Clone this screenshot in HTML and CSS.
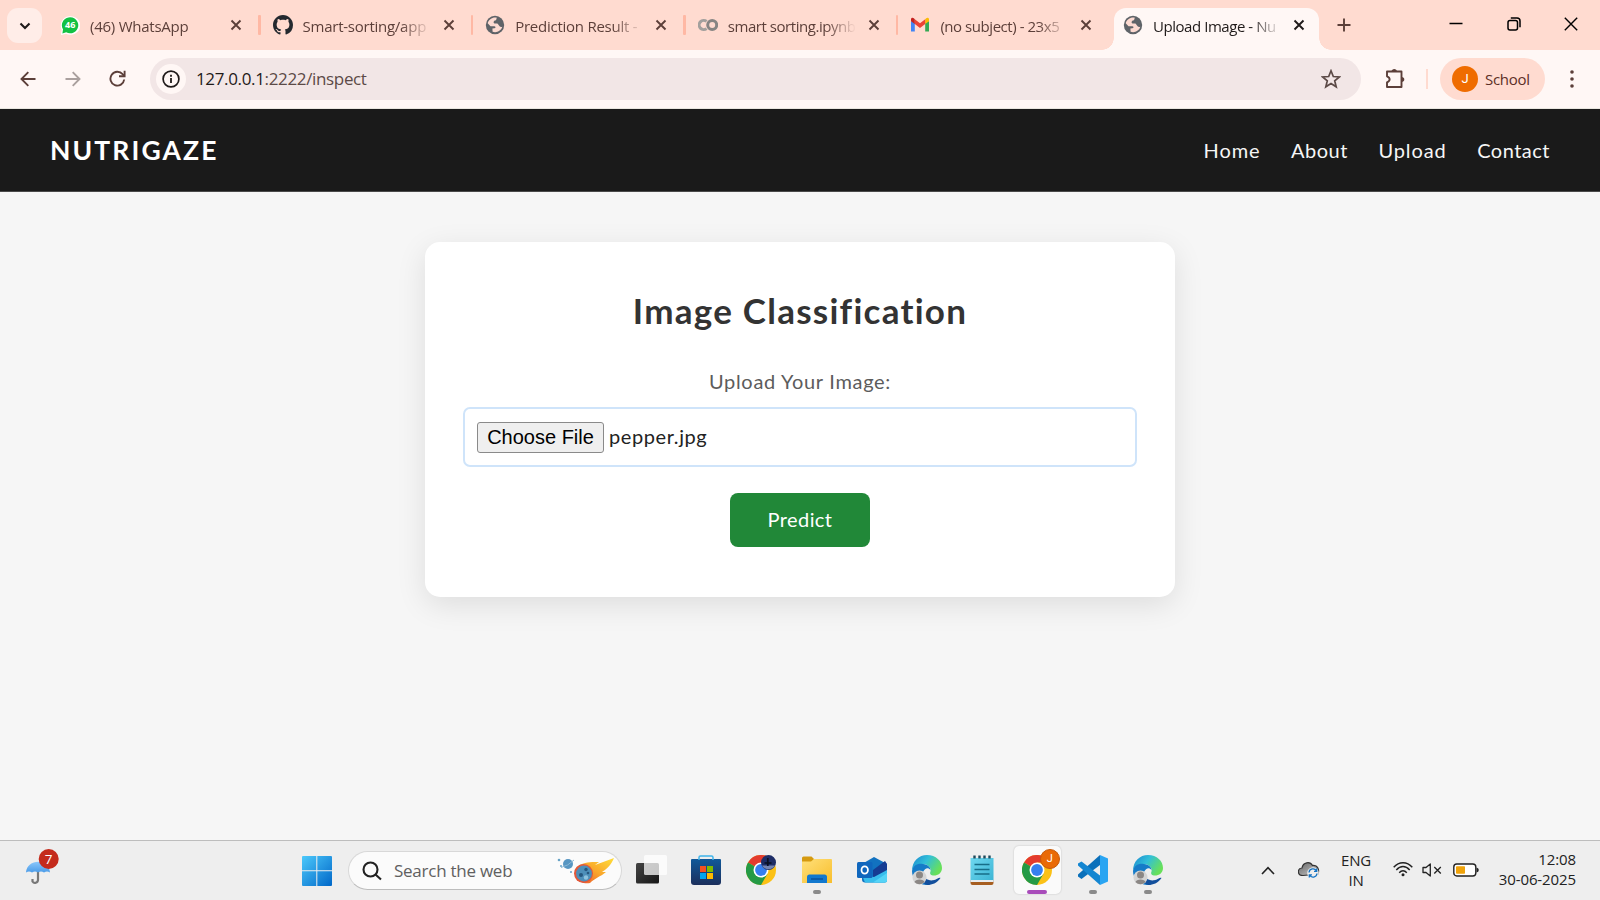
FILE: index.html
```
<!DOCTYPE html>
<html lang="en">
<head>
<meta charset="utf-8">
<title>Upload Image - NutriGaze</title>
<link rel="stylesheet" href="styles.css">
</head>
<body>
<svg class="defs" width="0" height="0" aria-hidden="true">
  <defs>
    <linearGradient id="win" x1="0" y1="0" x2="1" y2="1"><stop offset="0" stop-color="#4cc9fb"/><stop offset="1" stop-color="#0067c8"/></linearGradient>
    <linearGradient id="store" x1="0" y1="0" x2="0" y2="1"><stop offset="0" stop-color="#10599a"/><stop offset="1" stop-color="#1c2f5c"/></linearGradient>
    <linearGradient id="folder" x1="0" y1="0" x2="1" y2="1"><stop offset="0" stop-color="#ffe07a"/><stop offset="1" stop-color="#f8be2c"/></linearGradient>
    <linearGradient id="edgeTop" x1="0" y1="0" x2="1" y2=".5"><stop offset="0" stop-color="#1a86d0"/><stop offset=".5" stop-color="#32bfd8"/><stop offset="1" stop-color="#68e05a"/></linearGradient>
    <linearGradient id="flame" x1="0" y1="1" x2="1" y2="0"><stop offset="0" stop-color="#e9502c"/><stop offset=".5" stop-color="#f9a62c"/><stop offset="1" stop-color="#ffdf38"/></linearGradient>
    <linearGradient id="umb" x1="0" y1="0" x2="0" y2="1"><stop offset="0" stop-color="#8cc8fb"/><stop offset="1" stop-color="#4a9be8"/></linearGradient>
    <linearGradient id="cloud" x1="0" y1="0" x2="1" y2="1"><stop offset="0" stop-color="#666"/><stop offset="1" stop-color="#ccc"/></linearGradient>
    <linearGradient id="pad" x1="0" y1="0" x2="1" y2="1"><stop offset="0" stop-color="#6fd8f0"/><stop offset="1" stop-color="#3cb4d4"/></linearGradient>
    <linearGradient id="view" x1="0" y1="0" x2="1" y2="1"><stop offset="0" stop-color="#444"/><stop offset="1" stop-color="#161616"/></linearGradient>
  </defs>
  <symbol id="close" viewBox="0 0 12 12"><path d="M1.500 1.500l9 9M10.500 1.500l-9 9" fill="none" stroke="currentColor" stroke-width="1.900"/></symbol>
  <symbol id="globe" viewBox="0 0 20 20"><circle cx="10" cy="10" r="9.200" fill="#5f6368"/><path d="M11.600 2.600C7.400 1.900 3.500 4.600 2.700 8.200L5.500 11.200H9.200C10.800 11.200 11 13 9.300 13.300L7.400 13.500 7.600 16.700C11.500 18.300 16.400 15.700 17.300 11.800 15.600 12.400 14.800 11.900 14 10.600 12.600 8.900 13.200 8.400 11 8.500 8.900 8.700 7.900 7.500 9 6.200 10 5.200 11.800 6 11.600 2.600Z" fill="#fddad1"/></symbol>
  <symbol id="chrome" viewBox="0 0 30 30">
    <circle cx="15" cy="15" r="15" fill="#fbc116"/>
    <path d="M15 15L2 7.500A15 15 0 0 1 28 7.500H15Z" fill="#e33b2e"/>
    <path d="M15 15L8.500 11.200 2 7.500A15 15 0 0 0 15 30L21.500 18.750Z" fill="#249a45"/>
    <circle cx="15" cy="15" r="7.500" fill="#fff"/><circle cx="15" cy="15" r="5.900" fill="#357ff0"/>
  </symbol>
  <symbol id="edge" viewBox="0 0 30 30">
    <path d="M0 16C0 6 7 0 15 0 24 0 30 6 30 13 30 18 26 20.500 22 20.500 19 20.500 17.300 19 18.500 16.500 19.500 13 16 9 11 9 5 9 1 12 0 16Z" fill="url(#edgeTop)"/>
    <path d="M0 16C1 10 6 8 11 9 15.500 9.500 18.500 12 18.500 15 16 12 13 13 11 17 9 22 12 27 18 30 8 31 0 25 0 16Z" fill="#167bc8"/>
    <path d="M11 17C10.500 23 16 26 21 25.300 25 24.700 27 22 28.500 23 25 28 20 30 15.500 30 9 29 7 21 11 17Z" fill="#124f9c"/>
    <circle cx="7.500" cy="22.500" r="7" fill="#d4d4d4"/><circle cx="7.500" cy="20" r="3.500" fill="#8b8785"/><path d="M2.500 27C3 23.500 12 23.500 12.500 27 9.500 30 5.500 30 2.500 27Z" fill="#8b8785"/>
  </symbol>
  <symbol id="gmail" viewBox="0 0 20 16"><path d="M1 4V14.500H4.800V6Z" fill="#4285f4"/><path d="M15.200 6V14.500H19V4Z" fill="#34a853"/><path d="M15.200 2.200V7L19 4.200V2.300C19 .8 17.300.3 16.200 1.300Z" fill="#fbbc04"/><path d="M4.800 7V2.200L10 6.200 15.200 2.200V7L10 11Z" fill="#ea4335"/><path d="M1 2.300V4.200L4.800 7V2.200L3.800 1.300C2.700.3 1 .8 1 2.300Z" fill="#c5221f"/></symbol>
</svg>

<header class="tabstrip">
  <button class="tab-search"><svg width="12" height="8" viewBox="0 0 12 8"><path d="M1.500 1.500L6 6l4.500-4.500" fill="none" stroke="#1f1a19" stroke-width="2.100"/></svg></button>
  <div class="tabs">
    <div class="tab">
      <svg class="fav" viewBox="0 0 20 20"><path d="M1 20L1.700 14.500A9.800 9.300 0 1 1 6 18.700Z" fill="#fff"/><path d="M2.400 18.500L3 14.300A8.200 8 0 1 1 6.200 17.300Z" fill="#12c143"/><text x="10.200" y="13" class="wa">46</text></svg>
      <span class="title">(46) WhatsApp</span><svg class="x"><use href="#close"/></svg>
    </div>
    <div class="tab">
      <svg class="fav" viewBox="0 0 16 16"><path fill="#24292f" d="M8 0C3.580 0 0 3.580 0 8c0 3.540 2.290 6.530 5.470 7.590.4.070.55-.17.55-.38 0-.19-.01-.82-.01-1.490-2.010.37-2.530-.49-2.690-.94-.09-.23-.48-.94-.82-1.130-.28-.15-.68-.52-.01-.53.63-.01 1.080.58 1.230.82.72 1.210 1.870.87 2.330.66.07-.52.28-.87.51-1.070-1.780-.2-3.640-.89-3.640-3.950 0-.87.31-1.590.82-2.150-.08-.2-.36-1.020.08-2.120 0 0 .67-.21 2.200.82.640-.18 1.320-.27 2-.27s1.360.09 2 .27c1.530-1.040 2.200-.82 2.200-.82.440 1.100.16 1.920.08 2.120.51.560.82 1.270.82 2.150 0 3.070-1.870 3.750-3.650 3.950.29.25.54.73.54 1.480 0 1.070-.01 1.930-.01 2.200 0 .21.15.46.55.38A8.010 8.010 0 0 0 16 8c0-4.420-3.580-8-8-8z"/></svg>
      <span class="title">Smart-sorting/app</span><svg class="x"><use href="#close"/></svg>
    </div>
    <div class="tab">
      <svg class="fav"><use href="#globe"/></svg>
      <span class="title">Prediction Result -</span><svg class="x"><use href="#close"/></svg>
    </div>
    <div class="tab">
      <svg class="fav" viewBox="0 0 20 20"><g fill="none" stroke-width="3"><path d="M8.600 6.400A4.600 4.600 0 1 0 8.600 13.600" stroke="#a3a09d"/><circle cx="14.200" cy="10" r="4.500" stroke="#878583"/></g></svg>
      <span class="title tight">smart sorting.ipynb</span><svg class="x"><use href="#close"/></svg>
    </div>
    <div class="tab">
      <svg class="fav" viewBox="0 -2 20 20"><use href="#gmail" width="20" height="16"/></svg>
      <span class="title tight">(no subject) - 23x5</span><svg class="x"><use href="#close"/></svg>
    </div>
    <div class="tab active">
      <svg class="fav"><use href="#globe"/></svg>
      <span class="title tight">Upload Image - Nu</span><svg class="x"><use href="#close"/></svg>
    </div>
  </div>
  <svg class="newtab" viewBox="0 0 14 14"><path d="M7 .5v13M.5 7h13" stroke="#5c3f39" stroke-width="1.900"/></svg>
  <div class="winctl">
    <svg width="14" height="14" viewBox="0 0 14 14"><path d="M.5 6.500h13" stroke="#000" stroke-width="1.500"/></svg>
    <svg width="14" height="14" viewBox="0 0 14 14" fill="none" stroke="#000" stroke-width="1.500"><rect x="1" y="3.500" width="9.500" height="9.500" rx="2"/><path d="M3.800 1H10a3 3 0 0 1 3 3v6.200"/></svg>
    <svg width="14" height="14" viewBox="0 0 14 14"><path d="M.8.800l12.400 12.400M13.200.800L.8 13.200" stroke="#000" stroke-width="1.400"/></svg>
  </div>
</header>

<div class="toolbar">
  <div class="history">
    <svg width="16" height="16" viewBox="0 0 16 16" fill="none" stroke="#5c3f39" stroke-width="1.900"><path d="M15.500 8H1.800M8.300 1.200L1.500 8l6.800 6.800"/></svg>
    <svg width="16" height="16" viewBox="0 0 16 16" fill="none" stroke="#aaa09e" stroke-width="1.900"><path d="M.5 8h13.700M7.700 1.200L14.500 8l-6.800 6.800"/></svg>
    <svg width="17" height="17" viewBox="0 0 17 17" fill="none" stroke="#5c3f39" stroke-width="1.900"><path d="M15.200 9.500A6.900 6.900 0 1 1 13.600 4.200L15.300 6"/><path d="M15.600.8V6.300H10"/></svg>
  </div>
  <div class="omnibox">
    <span class="info"><svg width="18" height="18" viewBox="0 0 18 18"><circle cx="9" cy="9" r="7.900" fill="none" stroke="#1f1a19" stroke-width="1.700"/><path d="M9 8v5M9 4.800v1.900" stroke="#1f1a19" stroke-width="1.800"/></svg></span>
    <span class="url"><b>127.0.0.1</b>:2222/inspect</span>
    <svg class="star" viewBox="0 0 20 20"><path d="M10 1.800l2.300 5.700 6.100.4-4.700 3.900 1.500 6-5.200-3.300-5.200 3.300 1.500-6L1.600 7.900l6.100-.4z" fill="none" stroke="#5c4a47" stroke-width="1.700"/></svg>
  </div>
  <svg class="ext" viewBox="0 0 22 22"><path d="M3 3.500h14.500V19H3v-4.700c3.500-1.500 3.500-4.600 0-6z" fill="none" stroke="#5c3f39" stroke-width="1.900" stroke-linejoin="round"/><path d="M7.500 3.500c0-3.500 5.500-3.500 5.500 0zM17.500 9c3.800 0 3.800 5 0 5z" fill="#5c3f39"/></svg>
  <i class="divider"></i>
  <div class="profile"><span class="avatar">J</span><span class="pname">School</span></div>
  <svg class="menu" viewBox="0 0 4 20" fill="#5c3f39"><circle cx="2" cy="3" r="1.800"/><circle cx="2" cy="10" r="1.800"/><circle cx="2" cy="17" r="1.800"/></svg>
</div>

<nav class="navbar">
  <a class="brand">NUTRIGAZE</a>
  <div class="links"><a class="wide">Home</a><a>About</a><a class="wide">Upload</a><a>Contact</a></div>
</nav>

<main class="page">
  <section class="card">
    <h1>Image Classification</h1>
    <label>Upload Your Image:</label>
    <div class="file"><span class="choose">Choose File</span><span class="fname">pepper.jpg</span></div>
    <button class="predict">Predict</button>
  </section>
</main>

<footer class="taskbar">
  <div class="widgets">
    <svg width="34" height="38" viewBox="0 0 34 38"><path d="M13 14v17a3 3 0 0 1-5.500 1.500V30" fill="none" stroke="#777" stroke-width="2.200"/><path d="M1 23.500C2 9 24 9 25 23.500c-2-1.500-4-1.500-6 0-2-1.500-4-1.500-6 0-2-1.500-4-1.500-6 0-2-1.500-4-1.500-6 0z" fill="url(#umb)"/><circle cx="23.700" cy="10" r="10" fill="#c42b1c"/><text x="23.700" y="15" class="seven">7</text></svg>
  </div>
  <svg class="start" viewBox="0 0 30 30"><path d="M0 1q0-1 1-1h13.300v14.300H0zM15.300 0H29q1 0 1 1v13.300H15.300zM0 15.300h14.300V30H1q-1 0-1-1zM15.300 15.300H30V29q0 1-1 1H15.300z" fill="url(#win)"/></svg>
  <div class="search">
    <svg width="20" height="20" viewBox="0 0 20 20" fill="none" stroke="#222" stroke-width="2.100"><circle cx="8.500" cy="8.500" r="7"/><path d="M13.500 13.500l5.500 5"/></svg>
    <span>Search the web</span>
    <svg class="comet" width="58" height="28" viewBox="0 0 58 28"><circle cx="11" cy="7" r="5" fill="#5796c2"/><path d="M4 10.500Q11 9 17 3" stroke="#8cb9d6" fill="none"/><circle cx="2" cy="3" r="1.300" fill="#67a3c7"/><circle cx="4" cy="9" r="1" fill="#67a3c7"/><circle cx="14" cy="15" r="1" fill="#67a3c7"/><path d="M19 11C26 4 36 5 42 5L38 8 57 1C54 8 50 12 45 15L49 15C43 20 38 21 33 26 23 28 15 20 19 11Z" fill="url(#flame)"/><circle cx="26.500" cy="16.500" r="9.500" fill="#e2583a"/><circle cx="27" cy="16.500" r="7.900" fill="#4d8fb9"/><circle cx="24" cy="18" r="2" fill="#26577f"/><circle cx="29" cy="12.500" r="1.700" fill="#26577f"/><circle cx="29" cy="20.500" r="2.200" fill="#8dc2dd"/><circle cx="31" cy="16" r="1.300" fill="#26577f"/></svg>
  </div>
  <div class="apps">
    <div class="app"><svg viewBox="0 0 30 30"><rect x="0" y="8" width="23" height="20.500" rx="1.500" fill="url(#view)"/><rect x="8" y="0" width="23" height="20" rx="1.500" fill="#fff" fill-opacity=".75"/></svg></div>
    <div class="app"><svg viewBox="0 0 30 30"><path d="M0 4.500Q0 4 1 4h28q1 0 1 .5V27q0 3-3 3H3q-3 0-3-3z" fill="url(#store)"/><path d="M8 5V2.500Q8 1 9.500 1h11Q22 1 22 2.500V5" fill="none" stroke="#3fb4ea" stroke-width="1.500"/><path fill="#f25022" d="M9 11h6v6H9z"/><path fill="#7fba00" d="M16 11h6v6h-6z"/><path fill="#00a4ef" d="M9 18h6v6H9z"/><path fill="#ffb900" d="M16 18h6v6h-6z"/></svg></div>
    <div class="app"><svg viewBox="0 0 30 30"><use href="#chrome" width="30" height="30"/><circle cx="22.500" cy="7.500" r="7.500" fill="#1d2d66"/><path d="M16 10.500h13a7.500 7.500 0 0 1-13 0z" fill="#7484b0"/><path d="M21.800 3v8M18.500 8h7" stroke="#0a1023" stroke-width="1.700"/></svg></div>
    <div class="app run"><svg viewBox="0 0 30 30"><path d="M0 3q0-1.500 1.500-1.500h8L12 4l-1 3H0z" fill="#d59a10"/><path d="M0 6.500h9L12 4h17q1 0 1 1v23H0z" fill="url(#folder)"/><path d="M5 28v-6q0-2.500 2.500-2.500h15q2.500 0 2.500 2.500v6z" fill="#1278ce"/><path d="M9 24h12" stroke="#0b529c" stroke-width="1.500"/></svg></div>
    <div class="app"><svg viewBox="0 0 30 30"><path d="M5 9L17 2l13 7v16q0 2.500-2.500 2.500H8q-3 0-3-3z" fill="#1272c0"/><path d="M16 15L28 6l2 3v7L16 25z" fill="#153c93"/><path d="M5 20l12 2 13-7v10q0 2.500-2.500 2.500H8z" fill="#37bdec"/><path d="M16 27.500L30 18v7q0 2.500-2.500 2.500z" fill="#55d4f7"/><rect y="7" width="15.500" height="16" rx="1.500" fill="#0f66bd"/><ellipse cx="7.700" cy="15" rx="3.200" ry="3.700" fill="none" stroke="#fff" stroke-width="1.800"/></svg></div>
    <div class="app"><svg viewBox="0 0 30 30"><use href="#edge" width="30" height="30"/></svg></div>
    <div class="app"><svg viewBox="0 0 30 30"><path d="M3.500 3h23v23h-23z" fill="url(#pad)"/><path d="M3.500 25.500h23V28q0 2-2 2h-19q-2 0-2-2z" fill="#a65e20"/><path d="M3.500 25h23v2h-23z" fill="#e9ecee"/><path d="M7.500 9.500h15M7.500 14.500h15M7.500 19h15" stroke="#176d88" stroke-width="1.600"/><path d="M7.500.5v3M12.500.5v3M17.500.5v3M22.500.5v3" stroke="#1d4a5c" stroke-width="2.400"/></svg></div>
    <div class="app current"><svg viewBox="0 0 30 30"><use href="#chrome" width="30" height="30"/></svg><span class="badge">J</span></div>
    <div class="app run"><svg viewBox="0 0 30 30"><path d="M22 0v10L3.500 24 0 21.500V19.500z" fill="#0b70ba"/><path d="M0 10.500V8.500L3.500 6.500 22 20.500V30z" fill="#1486d1"/><path d="M22 0l8 3.500v23L22 30z" fill="#2aa5f2"/></svg></div>
    <div class="app run"><svg viewBox="0 0 30 30"><use href="#edge" width="30" height="30"/></svg></div>
  </div>
  <div class="tray">
    <svg class="chev" width="14" height="9" viewBox="0 0 14 9"><path d="M1 8l6-6.300L13 8" fill="none" stroke="#222" stroke-width="1.600"/></svg>
    <svg class="cloud" width="22" height="18" viewBox="0 0 22 18"><path d="M5 14.500C-1 14.500-1 7.500 4 7 5 1 12 0 14.500 4.500 20 4 21.500 9 20 13z" fill="url(#cloud)" stroke="#333" stroke-width="1.200"/><circle cx="15" cy="12" r="5.800" fill="#eee"/><path d="M11 11.500a4 4 0 0 1 7.500-1.500M19 12.500a4 4 0 0 1-7.500 1.500M18.700 7.500V10.300H16M11.300 16.500v-2.700H14" fill="none" stroke="#1473c4" stroke-width="1.300"/></svg>
    <div class="lang"><span>ENG</span><span>IN</span></div>
    <svg class="wifi" width="20" height="15" viewBox="0 0 20 15" fill="none" stroke="#222" stroke-width="1.400"><path d="M.7 5.300C6-.8 14-.8 19.300 5.300M3.300 8C7.500 3.300 12.500 3.300 16.700 8M6.200 10.700c2.300-2.600 5.300-2.600 7.600 0"/><circle cx="10" cy="12.700" r="1.500" fill="#222" stroke="none"/></svg>
    <svg class="vol" width="20" height="14" viewBox="0 0 20 14" fill="none" stroke="#222" stroke-width="1.300"><path d="M1 4.500h3L8.300 1v12L4 9.500H1z" stroke-linejoin="round"/><path d="M12.300 4l6.500 6.500M18.800 4l-6.500 6.500"/></svg>
    <svg class="bat" width="26" height="14" viewBox="0 0 26 14"><rect x=".8" y="1" width="22" height="12" rx="3" fill="#fff" stroke="#222" stroke-width="1.400"/><rect x="3" y="3.200" width="9" height="7.600" rx=".8" fill="#f0a30a"/><path d="M23.500 4.500q2.300.5 2.300 2.500t-2.300 2.500z" fill="#222"/></svg>
    <div class="clock"><span>12:08</span><span>30-06-2025</span></div>
  </div>
</footer>
</body>
</html>
```
FILE: styles.css
```
* { box-sizing: border-box; }
body {
  margin: 0; width: 1600px; height: 900px; overflow: hidden;
  display: flex; flex-direction: column;
  font-family: "Open Sans", "Noto Sans", sans-serif;
  background: #f6f6f6;
}
svg { display: block; flex: none; }
.defs { position: absolute; }
button { border: 0; padding: 0; font: inherit; }
span, a { white-space: nowrap; }

/* tab strip */
.tabstrip { height: 50px; flex: none; display: flex; background: #ffdbd0; }
.tab-search { width: 35px; height: 35px; margin: 8px 6px 0 7px; border-radius: 11px; background: #ffede8; display: flex; align-items: center; justify-content: center; }
.tabs { display: flex; }
.tab { width: 212.600px; height: 50px; padding-left: 12px; display: flex; align-items: center; color: #5c3f39; position: relative; }
.tab:nth-child(-n+4)::after { content: ""; width: 2.500px; height: 20px; background: #ffb8a4; border-radius: 1px; margin-left: auto; }
.fav { width: 20px; height: 20px; }
.title { width: 127px; margin-left: 10px; font-size: 15px; letter-spacing: -.25px; overflow: hidden; line-height: 24px; margin-top: 1px;
  -webkit-mask-image: linear-gradient(to right, #000 98px, transparent 128px); mask-image: linear-gradient(to right, #000 98px, transparent 128px); }
.tight { letter-spacing: -.45px; }
.x { width: 12px; height: 12px; margin-left: 13px; }
.tab.active { width: 205px; margin: 8px 0 0 3px; height: 42px; padding: 0 0 8px 9px; background: #fff7f5; border-radius: 12px 12px 0 0; color: #1f1a19; }
.tab.active::before, .tab.active::after { content: ""; position: absolute; bottom: 0; width: 12px; height: 12px; }
.tab.active::before { left: -12px; background: radial-gradient(circle at 0 0, transparent 11.500px, #fff7f5 12px); }
.tab.active::after { right: -12px; background: radial-gradient(circle at 100% 0, transparent 11.500px, #fff7f5 12px); }
.newtab { width: 14px; height: 14px; margin: 18px 0 0 18px; }
.winctl { margin-left: auto; display: flex; gap: 43.500px; padding: 17px 22px 0 0; }
.wa { font: bold 9px "Open Sans", sans-serif; fill: #fff; text-anchor: middle; }

/* toolbar */
.toolbar { height: 59px; flex: none; display: flex; align-items: center; padding-bottom: 1px; background: linear-gradient(#ffdbd0 0 12px, transparent 12px); background: #fff7f5; border-bottom: 1px solid #e9e6df; }
.history { width: 150px; padding-left: 20px; display: flex; gap: 28.500px; align-items: center; }
.omnibox { width: 1211px; height: 42px; border-radius: 21px; background: #f2e6e6; display: flex; align-items: center; padding: 0 20px 0 6px; }
.info { width: 30px; height: 30px; border-radius: 50%; background: #fff7f5; display: flex; align-items: center; justify-content: center; }
.url { margin-left: 10px; font-size: 17px; letter-spacing: -.35px; color: #5c4a47; }
.url b { font-weight: 400; color: #1f1a19; }
.star { width: 20px; height: 20px; margin-left: auto; }
.ext { width: 22px; height: 22px; margin-left: 23px; }
.divider { width: 2px; height: 20px; background: #ffdbd0; margin: 0 12px 0 20px; }
.profile { width: 105px; height: 42px; border-radius: 21px; background: #ffdbd0; display: flex; align-items: center; padding-left: 12px; color: #5c2f26; font-size: 15px; letter-spacing: -.3px; }
.avatar { width: 26px; height: 26px; border-radius: 50%; background: #ef6c00; color: #fff; font: 13px/26px Roboto, sans-serif; text-align: center; margin-right: 7px; }
.menu { width: 4px; height: 20px; margin-left: 25px; }

/* site */
.navbar { height: 83px; flex: none; background: #1a1a1a; border-bottom: 1px solid #4a4a4a; display: flex; align-items: center; justify-content: space-between; padding: 0 50px; font-family: Lato, sans-serif; color: #fff; }
.brand { font-size: 26.500px; font-weight: 700; letter-spacing: 2.100px; }
.links { display: flex; gap: 30.500px; margin-top: -1px; font-size: 20px; letter-spacing: .5px; color: #f6f6f6; }
.wide { letter-spacing: .9px; }
.page { flex: 1; padding-top: 50px; font-family: Lato, sans-serif; background: #f6f6f6; }
.card { width: 750px; height: 355px; margin: 0 auto; padding: 46px 38px 0; border-radius: 15px; background: #fff; box-shadow: 0 8px 30px rgba(0,0,0,.1); display: flex; flex-direction: column; align-items: center; }
h1 { margin: 0; font-size: 35px; line-height: 44px; font-weight: 700; letter-spacing: 1.250px; color: #333; }
label { margin-top: 35px; height: 30px; font-size: 20px; line-height: 28px; letter-spacing: .7px; color: #5c5c5c; }
.file { width: 674px; height: 60px; margin-top: 10px; border: 2px solid #cfe4fa; border-radius: 7px; display: flex; align-items: center; padding-left: 12px; font-size: 20px; color: #222; }
.choose { width: 127px; height: 31px; margin-right: 5px; border: 1px solid #8a8a8a; border-radius: 3px; background: #efefef; color: #000; font: 20px/29px "Liberation Sans", Arial, sans-serif; text-align: center; }
.fname { letter-spacing: .6px; margin-top: -2px; }
.predict { width: 140px; height: 54px; margin-top: 26px; padding-bottom: 2px; border-radius: 8px; background: #218838; color: #fff; font-size: 20px; letter-spacing: .4px; }

/* taskbar */
.taskbar { height: 60px; flex: none; display: flex; align-items: center; background: #eee; border-top: 1px solid #bdbdbd; }
.widgets { width: 302px; padding: 0 0 6px 25px; }
.seven { font: 13.500px "Open Sans", sans-serif; fill: #fff; text-anchor: middle; }
.start { width: 30px; height: 30px; }
.search { width: 274px; height: 39px; margin-left: 16px; border: 1px solid #d8d8d8; border-bottom-color: #bdbdbd; border-radius: 20px; background: #fbfbfb; display: flex; align-items: center; padding-left: 13px; color: #606060; font-size: 17px; letter-spacing: -.25px; }
.search span { margin-left: 12px; }
.comet { margin-left: auto; margin-right: 6px; }
.apps { display: flex; margin-left: 1.500px; }
.app { width: 55.200px; height: 59px; padding-bottom: 1px; display: flex; align-items: center; justify-content: center; position: relative; }
.app svg { width: 30px; height: 30px; overflow: visible; position: relative; }
.run::after, .current::after { content: ""; position: absolute; left: 50%; bottom: 6px; width: 8px; height: 4px; margin-left: -4px; border-radius: 2px; background: #8a8a8a; }
.current::before { content: ""; position: absolute; inset: 5px 4px 6px; border-radius: 5px; background: #fafafa; box-shadow: 0 0 2px rgba(0,0,0,.2); }
.current::after { width: 20px; margin-left: -10px; background: #a84cba; }
.badge { position: absolute; left: 30px; top: 8px; width: 20px; height: 20px; border-radius: 50%; background: #e96a06; border: 1px solid #c75a08; color: #fff; font: 11px/18px Roboto, sans-serif; text-align: center; }
.tray { margin-left: auto; padding: 0 24px 2px 0; display: flex; align-items: center; color: #222; font-size: 15px; line-height: 20px; }
.chev { margin-top: 1px; }
.cloud { margin-left: 23px; margin-top: 1px; }
.lang { width: 40px; margin-left: 16px; display: flex; flex-direction: column; align-items: center; letter-spacing: -.2px; }
.wifi { margin-left: 17px; }
.vol { margin-left: 9px; }
.bat { margin-left: 11px; }
.clock { width: 97px; display: flex; flex-direction: column; align-items: flex-end; letter-spacing: -.1px; margin-top: -2px; }
```
